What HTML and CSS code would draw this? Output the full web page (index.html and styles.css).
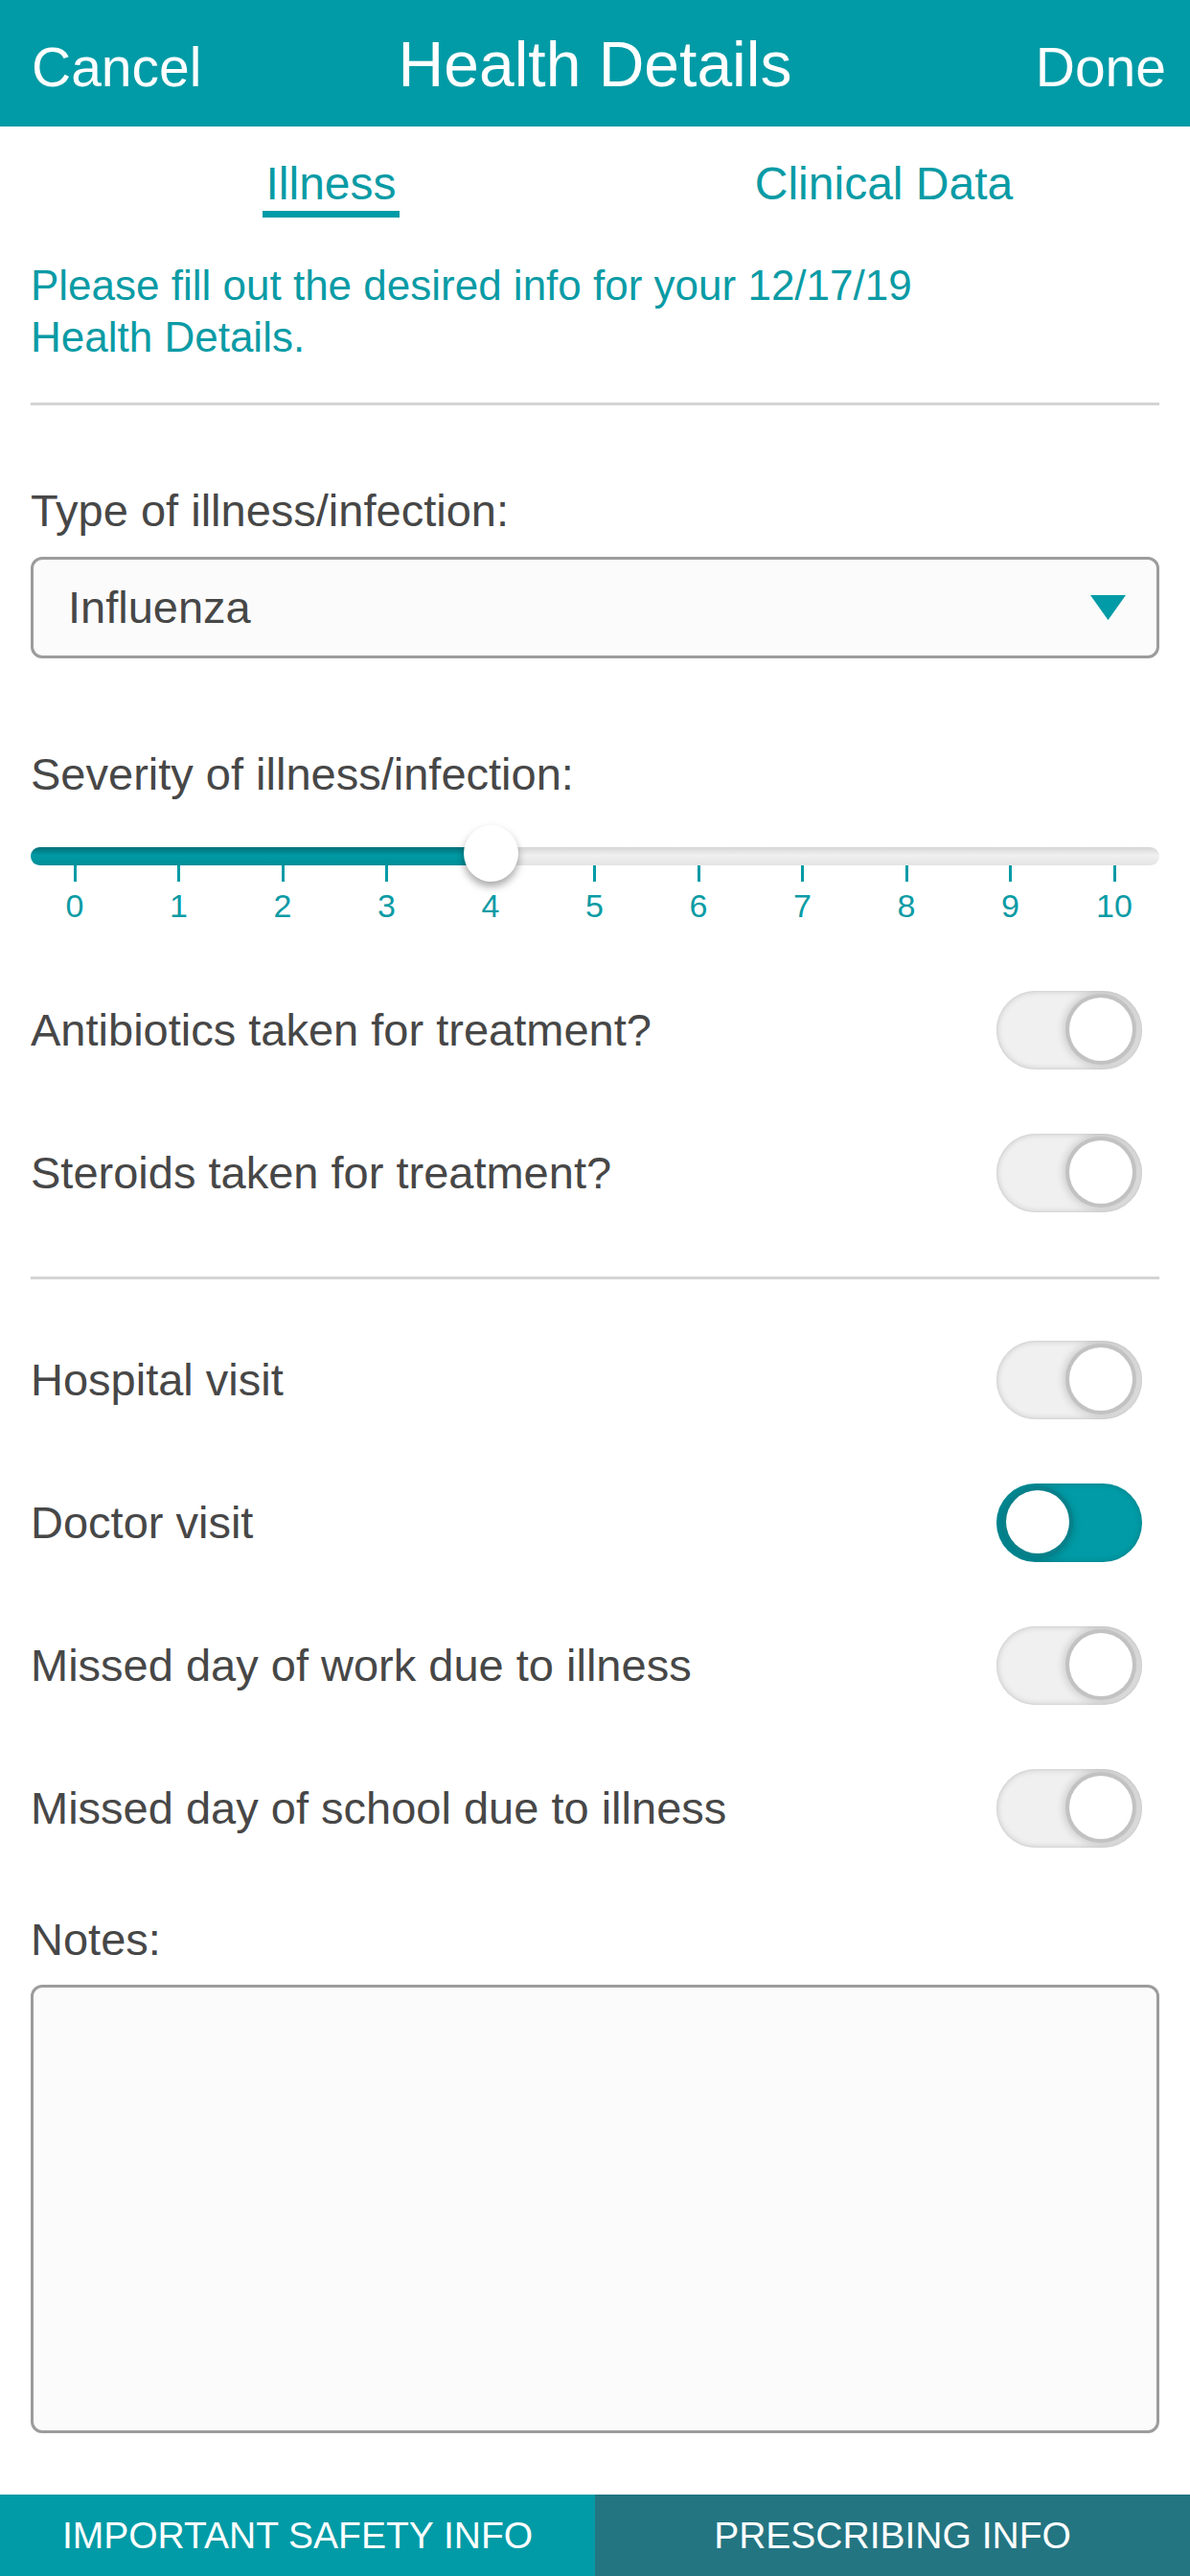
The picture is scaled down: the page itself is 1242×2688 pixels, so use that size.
FILE: index.html
```html
<!DOCTYPE html>
<html lang="en">

<head>
    <meta charset="UTF-8">
    <meta name="viewport" content="width=device-width, initial-scale=1.0">
    <title>Health Details</title>
    <link rel="stylesheet" href="styles.css">
</head>

<body>
    <!-- Barra superior -->
    <header class="topbar">
        <span class="topbar-btn cancel">Cancel</span>
        <h1>Health Details</h1>
        <span class="topbar-btn done">Done</span>
    </header>

    <!-- Pestañas -->
    <nav class="tabs">
        <div class="tab"><span class="tab-label active">Illness</span></div>
        <div class="tab"><span class="tab-label">Clinical Data</span></div>
    </nav>

    <main class="content">
        <p class="intro">Please fill out the desired info for your 12/17/19<br>Health Details.</p>

        <div class="divider"></div>

        <div class="field-label first">Type of illness/infection:</div>
        <div class="select">
            <span>Influenza</span>
            <svg class="select-arrow" width="37" height="26" viewBox="0 0 37 26">
                <polygon points="0,0 37,0 18.5,26" fill="#009ba6" />
            </svg>
        </div>

        <div class="field-label severity">Severity of illness/infection:</div>
        <div class="slider">
            <div class="slider-track">
                <div class="slider-fill" style="width: 481px"></div>
            </div>
            <div class="slider-thumb" style="left: 452px"></div>
            <div class="slider-scale">
                <div class="step"><span class="step-line"></span><span class="step-num">0</span></div>
                <div class="step"><span class="step-line"></span><span class="step-num">1</span></div>
                <div class="step"><span class="step-line"></span><span class="step-num">2</span></div>
                <div class="step"><span class="step-line"></span><span class="step-num">3</span></div>
                <div class="step"><span class="step-line"></span><span class="step-num">4</span></div>
                <div class="step"><span class="step-line"></span><span class="step-num">5</span></div>
                <div class="step"><span class="step-line"></span><span class="step-num">6</span></div>
                <div class="step"><span class="step-line"></span><span class="step-num">7</span></div>
                <div class="step"><span class="step-line"></span><span class="step-num">8</span></div>
                <div class="step"><span class="step-line"></span><span class="step-num">9</span></div>
                <div class="step"><span class="step-line"></span><span class="step-num">10</span></div>
            </div>
        </div>

        <div class="toggle-group treatment">
            <div class="toggle-row">
                <span>Antibiotics taken for treatment?</span>
                <span class="switch"><span class="knob"></span></span>
            </div>
            <div class="toggle-row">
                <span>Steroids taken for treatment?</span>
                <span class="switch"><span class="knob"></span></span>
            </div>
        </div>

        <div class="divider second"></div>

        <div class="toggle-group visits">
            <div class="toggle-row">
                <span>Hospital visit</span>
                <span class="switch"><span class="knob"></span></span>
            </div>
            <div class="toggle-row">
                <span>Doctor visit</span>
                <span class="switch on"><span class="knob"></span></span>
            </div>
            <div class="toggle-row">
                <span>Missed day of work due to illness</span>
                <span class="switch"><span class="knob"></span></span>
            </div>
            <div class="toggle-row">
                <span>Missed day of school due to illness</span>
                <span class="switch"><span class="knob"></span></span>
            </div>
        </div>

        <div class="field-label notes-label">Notes:</div>
        <div class="notes"></div>
    </main>

    <!-- Pie con enlaces -->
    <footer class="bottom-bar">
        <a href="#" class="safety">IMPORTANT SAFETY INFO</a>
        <a href="#" class="prescribing">PRESCRIBING INFO</a>
    </footer>
</body>

</html>
```

FILE: styles.css
```css
/* General */
body {
    margin: 0;
    font-family: Arial, "Liberation Sans", Helvetica, sans-serif;
    background-color: #fff;
    color: #474747;
    display: flex;
    flex-direction: column;
    min-height: 100vh;
}

/* Barra superior */
.topbar {
    box-sizing: border-box;
    height: 132px;
    padding: 34px 29px 0;
    background-color: #009ba6;
    color: #fff;
    display: grid;
    grid-template-columns: 1fr auto 1fr;
    align-items: baseline;
}

.topbar h1 {
    margin: 0;
    font-size: 66px;
    font-weight: normal;
    line-height: 66px;
}

.topbar-btn {
    font-size: 57px;
    line-height: 57px;
}

.topbar-btn.cancel {
    margin-left: 4px;
}

.topbar-btn.done {
    justify-self: end;
    margin-right: -4px;
}

/* Pestañas */
.tabs {
    display: grid;
    grid-template-columns: 1fr 1fr;
    padding: 32px 31px 0 57px;
}

.tab {
    text-align: center;
}

.tab-label {
    display: inline-block;
    padding: 0 3px;
    font-size: 48px;
    line-height: 56px;
    color: #0a9ba5;
    border-bottom: 7px solid transparent;
}

.tab-label.active {
    border-bottom-color: #009ba6;
}

/* Contenido */
.content {
    padding: 0 32px;
}

.intro {
    margin: 44px 0 0;
    font-size: 44px;
    line-height: 54px;
    color: #0a9ba5;
}

.divider {
    height: 3px;
    margin-top: 41px;
    background-color: #d4d4d4;
}

.divider.second {
    margin-top: 34px;
}

.field-label {
    font-size: 47px;
    line-height: 56px;
    color: #474747;
}

.field-label.first {
    margin-top: 82px;
}

.field-label.severity {
    margin-top: 93px;
}

.field-label.notes-label {
    margin-top: 35px;
}

.select {
    box-sizing: border-box;
    height: 106px;
    margin-top: 20px;
    padding: 0 32px 0 36px;
    border: 3px solid #9c9c9c;
    border-radius: 12px;
    background-color: #fbfbfb;
    display: flex;
    align-items: center;
    justify-content: space-between;
    font-size: 47px;
    line-height: 56px;
}

/* Slider */
.slider {
    position: relative;
    margin-top: 20px;
    padding-top: 28px;
}

.slider-track {
    height: 19px;
    border-radius: 10px;
    background: linear-gradient(#d6d6d6, #f0f0f0 45%, #e4e4e4);
    overflow: hidden;
}

.slider-fill {
    height: 100%;
    background: linear-gradient(#006f78, #009aa4 45%, #008f99);
}

.slider-thumb {
    position: absolute;
    top: 5px;
    width: 57px;
    height: 59px;
    border-radius: 50%;
    background-color: #fff;
    box-shadow: 0 5px 8px rgba(0, 0, 0, 0.35);
}

.slider-scale {
    display: flex;
    justify-content: space-between;
    padding: 0 27px 0 26px;
}

.step {
    width: 40px;
    display: flex;
    flex-direction: column;
    align-items: center;
}

.step-line {
    width: 3px;
    height: 17px;
    background-color: #009ba6;
}

.step-num {
    margin-top: 5px;
    font-size: 34px;
    line-height: 40px;
    color: #0a9ba5;
}

/* Interruptores */
.toggle-group.treatment {
    margin-top: 35px;
}

.toggle-group.visits {
    margin-top: 30px;
}

.toggle-row {
    height: 149px;
    padding-right: 18px;
    display: flex;
    align-items: center;
    justify-content: space-between;
    font-size: 47px;
    line-height: 56px;
}

.switch {
    box-sizing: border-box;
    width: 152px;
    height: 82px;
    padding: 0 10px 2px;
    border-radius: 41px;
    background-color: #f0f0f0;
    box-shadow: inset 0 0 0 1px #d8d8d8, inset 0 0 7px rgba(0, 0, 0, 0.18);
    overflow: hidden;
    display: flex;
    align-items: center;
    justify-content: flex-end;
}

.knob {
    width: 66px;
    height: 66px;
    border-radius: 50%;
    background-color: #fff;
    box-shadow: 0 0 0 4px #c2c2c2, 0 0 8px 6px rgba(0, 0, 0, 0.16);
}

.switch.on {
    justify-content: flex-start;
    background-color: #009ba6;
    box-shadow: inset 0 0 6px rgba(0, 60, 66, 0.3);
}

.switch.on .knob {
    box-shadow: 0 0 0 4px #08808a, -2px 2px 8px 6px rgba(0, 50, 55, 0.3);
}

/* Notas */
.notes {
    box-sizing: border-box;
    height: 468px;
    margin-top: 19px;
    border: 3px solid #9c9c9c;
    border-radius: 12px;
    background-color: #fbfbfb;
}

/* Pie */
.bottom-bar {
    margin-top: auto;
    height: 85px;
    display: grid;
    grid-template-columns: 1fr 1fr;
}

.bottom-bar a {
    color: #fff;
    text-decoration: none;
    text-align: center;
    font-size: 39px;
    line-height: 85px;
}

.bottom-bar .safety {
    background-color: #009ba6;
}

.bottom-bar .prescribing {
    background-color: #237582;
}
```
